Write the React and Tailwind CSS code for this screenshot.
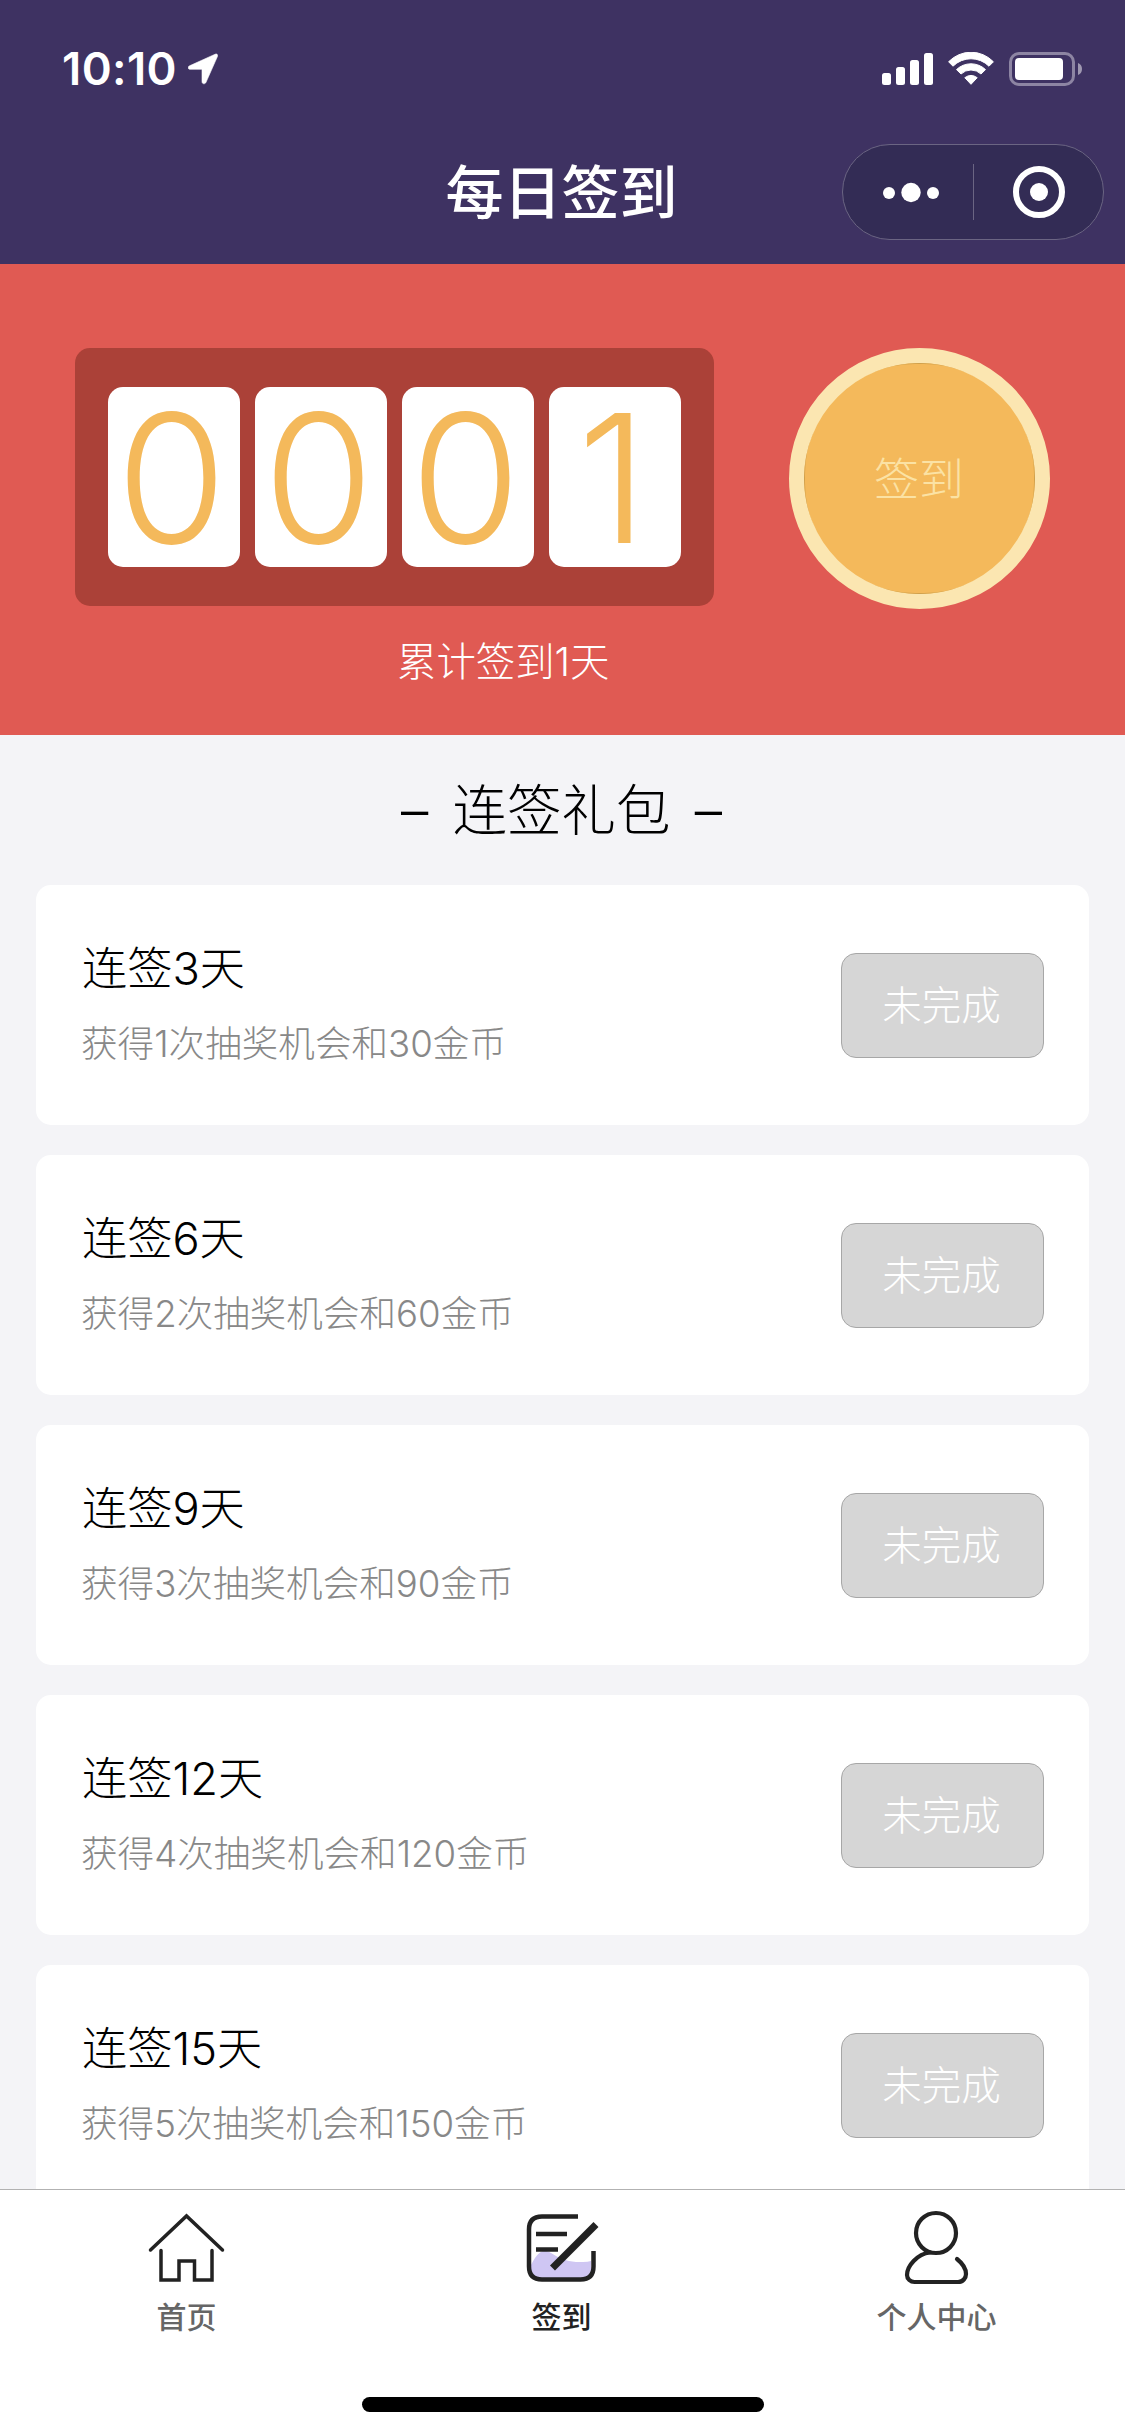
// Hooks
import React, { useState } from 'react';

const gifts = [
  { days: 3, draws: 1, coins: 30 },
  { days: 6, draws: 2, coins: 60 },
  { days: 9, draws: 3, coins: 90 },
  { days: 12, draws: 4, coins: 120 },
  { days: 15, draws: 5, coins: 150 },
];

function StatusBar() {
  return (
    <div className="flex h-[138px] items-center justify-between pl-[62px] pr-[42px] text-white">
      <div className="flex items-center gap-[11px]">
        <span className="text-[45.500px] font-semibold leading-none tracking-[0.4px]">10:10</span>
        <svg className="h-[32px] w-[30px]" viewBox="0 0 30 32" fill="currentColor">
          <path d="M27.2 1.2 1.6 12.8C-.6 13.8 0 16.3 2 16.3H14V28.5c0 2.8 3.2 2.9 4 .8L29.4 3.6C30.2 1.6 28.8.5 27.2 1.2Z" stroke="currentColor" strokeWidth="0.600" />
        </svg>
      </div>
      <svg className="h-[34px] w-[201px]" viewBox="0 0 201 34" fill="currentColor">
        {/* Signal */}
        <rect x="0" y="21" width="9" height="12" rx="2.5" />
        <rect x="14" y="15" width="9" height="18" rx="2.5" />
        <rect x="28" y="8" width="9" height="25" rx="2.5" />
        <rect x="42" y="1" width="9" height="32" rx="2.5" />
        {/* Wifi */}
        <path d="M66.600 9.800A31 31 0 0 1 111.400 9.800L107 14.200A25.500 25.500 0 0 0 71 14.200Z" stroke="currentColor" strokeWidth="1" strokeLinejoin="round" />
        <path d="M74.500 17.600A21 21 0 0 1 103.500 17.600L99 22A14.500 14.500 0 0 0 79 22Z" stroke="currentColor" strokeWidth="1" strokeLinejoin="round" />
        <path d="M82.800 25.700A10.500 10.500 0 0 1 95.200 25.700L89 32.300Z" stroke="currentColor" strokeWidth="1" strokeLinejoin="round" />
        {/* Battery */}
        <rect x="128.500" y="1.500" width="63" height="31" rx="8.500" fill="none" stroke="#8d85a3" strokeWidth="3" />
        <rect x="133" y="6" width="48" height="22" rx="4" />
        <path d="M196 11a6.500 6.500 0 0 1 0 12Z" fill="#9f98b1" />
      </svg>
    </div>
  );
}

function NavHeader() {
  return (
    <div className="grid h-[126px] grid-cols-3 items-start text-white">
      <div />
      <h1 className="whitespace-nowrap pr-[2px] pt-[20px] text-center text-[58px] font-medium leading-[70px]">每日签到</h1>
      <div className="mr-[21px] mt-[6px] flex h-[96px] w-[262px] items-center justify-self-end rounded-full border border-[#6b6583] bg-[#332c55]">
        <svg className="h-full w-full" viewBox="0 0 260 94" fill="currentColor">
          <circle cx="46" cy="48" r="6" />
          <circle cx="68" cy="47.500" r="9.700" />
          <circle cx="90" cy="48" r="6" />
          <rect x="130" y="19" width="1" height="56" fill="#6b6583" />
          <circle cx="196" cy="47" r="23" fill="none" stroke="currentColor" strokeWidth="6" />
          <circle cx="196" cy="47" r="9" />
        </svg>
      </div>
    </div>
  );
}

function Counter({ days }) {
  const digits = String(days).padStart(4, '0').split('');

  return (
    <section className="flex h-[471px] justify-between bg-[#e05a53] pl-[75px] pr-[75px] pt-[84px]">
      <div>
        <div className="flex h-[258px] w-[639px] items-center gap-[15px] rounded-[15px] bg-[#ab4138] px-[33px]">
          {digits.map((digit, index) => (
            <div key={index} className="flex h-[180px] w-[132px] items-center justify-center rounded-[15px] bg-white pr-[5px] pt-[2px]">
              <span className="text-[179px] font-[260] leading-[178px] text-[#f4b95b]">{digit}</span>
            </div>
          ))}
        </div>
        <p className="pl-[322px] pt-[29px] text-[39.400px] font-light leading-[54px] text-white">累计签到{days}天</p>
      </div>
      <button className="flex size-[261px] overflow-hidden rounded-full border-[15px] border-[#fbe6b1] bg-[#f4b95b] text-[45px] font-light leading-none text-[#fbe2a4]">
        <span className="flex size-[231px] items-center justify-center rounded-[111px] border border-[#cfa04c] pr-[1px] pt-[2px]">签到</span>
      </button>
    </section>
  );
}

function GiftCard({ gift }) {
  return (
    <li className="flex h-[240px] shrink-0 items-center justify-between rounded-[15px] bg-white px-[45px]">
      <div>
        <h3 className="pl-px text-[45.200px] font-light leading-[60px] text-black">连签{gift.days}天</h3>
        <p className="mt-[18px] text-[36.600px] font-light leading-[54px] text-[#888888]">
          获得{gift.draws}次抽奖机会和{gift.coins}金币
        </p>
      </div>
      <button className="h-[105px] w-[203px] rounded-[15px] border border-[#a7a7a7] bg-[#d6d6d6] pr-[2px] pt-[4px] text-[39.500px] font-light leading-none text-white">
        未完成
      </button>
    </li>
  );
}

function HomeIcon() {
  return (
    <svg className="size-[81px]" viewBox="0 0 81 81" fill="none" stroke="#222" strokeWidth="3.500" strokeLinecap="round">
      <path d="M4.500 43 40.500 9 76.500 43" />
      <path d="M15 43.500V73H33V54H48.500V73H66V43.500" />
    </svg>
  );
}

function SignIcon() {
  return (
    <svg className="size-[81px]" viewBox="0 0 81 81" fill="none" stroke="#222" strokeWidth="4.500">
      <path d="M9 60C14 50 18 44 24 44c8 0 13 12 38 11q5 0 8-1V62q0 10-10 10H20Q10 72 9 60Z" fill="#cfc6f3" stroke="none" />
      <path d="M57 9.500H21Q8 9.500 8 22.500V59.500Q8 72.500 21 72.500H59.500Q72.500 72.500 72.500 59.500V44" />
      <path d="M15 27H46M15 42.500H37" />
      <path d="M31.500 61 75 17.500" strokeWidth="7" />
    </svg>
  );
}

function UserIcon() {
  return (
    <svg className="size-[81px]" viewBox="0 0 81 81" fill="none" stroke="#222" strokeWidth="4.200" strokeLinecap="round">
      <circle cx="40" cy="26" r="20" />
      <path d="M34 45.500C21 47 11 59 11 68c0 4 3.500 7 7.500 7H62c5 0 8-4 8-8 0-5-4-11-9-15" />
    </svg>
  );
}

const tabs = [
  { label: '首页', Icon: HomeIcon },
  { label: '签到', Icon: SignIcon },
  { label: '个人中心', Icon: UserIcon },
];

export default function App() {
  const [active, setActive] = useState('签到');

  return (
    <div className="flex h-[2436px] w-[1125px] flex-col overflow-hidden bg-[#f4f4f7] font-['Inter','Noto_Sans_CJK_SC',sans-serif]">
      <header className="shrink-0 bg-[#3e3262]">
        <StatusBar />
        <NavHeader />
      </header>

      {/* Content section */}
      <main className="min-h-0 flex-1 overflow-hidden">
        <Counter days={1} />
        <h2 className="h-[150px] pr-[2px] pt-[39px] text-center text-[54.500px] font-light leading-[72px] text-black [word-spacing:9px]">– 连签礼包 –</h2>
        <ul className="flex flex-col gap-[30px] px-[36px]">
          {gifts.map((gift) => (
            <GiftCard key={gift.days} gift={gift} />
          ))}
        </ul>
      </main>

      {/* Tab bar */}
      <footer className="flex h-[247px] shrink-0 flex-col items-center border-t border-[#b2b2b2] bg-white">
        <nav className="grid w-full grid-cols-3">
          {tabs.map(({ label, Icon }) => (
            <button
              key={label}
              onClick={() => setActive(label)}
              className={`flex flex-col items-center pr-[2px] pt-[17px] text-[30px] font-medium leading-[42px] ${active === label ? 'text-[#222222]' : 'text-[#666666]'}`}
            >
              <Icon />
              <span className="mt-[8px]">{label}</span>
            </button>
          ))}
        </nav>
        <div className="mt-[59px] h-[15px] w-[402px] rounded-full bg-black" />
      </footer>
    </div>
  );
}
